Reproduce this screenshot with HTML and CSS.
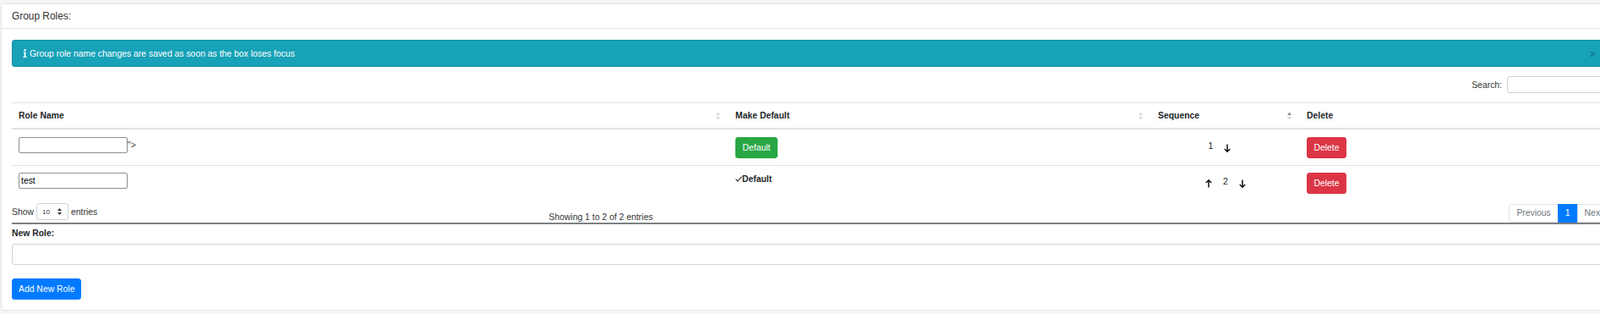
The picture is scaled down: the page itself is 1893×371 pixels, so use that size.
FILE: index.html
```html
<!DOCTYPE html>
<html lang="en">
<head>
<meta charset="utf-8">
<title>Group Roles</title>
<link rel="stylesheet" href="styles.css">
</head>
<body>
<div class="page">
  <section class="card">
    <header class="card-header">Group Roles:</header>
    <div class="card-body">
      <div class="alert">
        <span class="alert-msg">
          <svg class="info-icon" width="5" height="10" viewBox="0 0 5 10" aria-hidden="true"><circle cx="2.6" cy="1.2" r="1.2" fill="#fff"/><path d="M0.6 3.4H3.4V8.8H4.6V10H0.4V8.8H1.6V4.6H0.6Z" fill="#fff"/></svg>
          Group role name changes are saved as soon as the box loses focus
        </span>
        <button class="close" type="button" aria-label="Close">×</button>
      </div>

      <div class="dt-top">
        <label class="search">Search:<input type="search" class="search-input"></label>
      </div>

      <table class="roles">
        <colgroup>
          <col class="c-name"><col class="c-default"><col class="c-seq"><col class="c-del">
        </colgroup>
        <thead>
          <tr>
            <th><div class="th-inner"><span>Role Name</span><svg class="sort" width="5" height="10" viewBox="0 0 5 10"><path d="M2.5 0.5L5 4H0Z" fill="#d5d8db"/><path d="M2.5 9.5L5 6H0Z" fill="#d5d8db"/></svg></div></th>
            <th><div class="th-inner"><span>Make Default</span><svg class="sort" width="5" height="10" viewBox="0 0 5 10"><path d="M2.5 0.5L5 4H0Z" fill="#d5d8db"/><path d="M2.5 9.5L5 6H0Z" fill="#d5d8db"/></svg></div></th>
            <th><div class="th-inner"><span>Sequence</span><svg class="sort" width="5" height="10" viewBox="0 0 5 10"><path d="M2.5 0.5L5 4H0Z" fill="#8a8f94"/><path d="M2.5 9.5L5 6H0Z" fill="#d5d8db"/></svg></div></th>
            <th><div class="th-inner"><span>Delete</span></div></th>
          </tr>
        </thead>
        <tbody>
          <tr>
            <td><div class="name-cell"><input type="text" class="name-input"><span class="stray">"&gt;</span></div></td>
            <td><button class="btn btn-success" type="button">Default</button></td>
            <td class="seq">
              <div class="seq-inner">
                <span class="num">1</span>
                <svg class="arrow" width="8" height="10" viewBox="0 0 8 10"><path d="M4 0.5V9.2M0.8 6L4 9.2L7.2 6" fill="none" stroke="#111" stroke-width="1.5"/></svg>
                <span class="spacer"></span>
              </div>
            </td>
            <td><button class="btn btn-danger" type="button">Delete</button></td>
          </tr>
          <tr>
            <td><div class="name-cell"><input type="text" class="name-input" value="test"></div></td>
            <td><span class="is-default"><svg class="check" width="8" height="7" viewBox="0 0 8 7"><path d="M0.5 3.6L2.8 6L7.6 0.6" fill="none" stroke="#222" stroke-width="1.1"/></svg>Default</span></td>
            <td class="seq">
              <div class="seq-inner">
                <svg class="arrow" width="8" height="10" viewBox="0 0 8 10"><path d="M4 9.5V0.8M0.8 4L4 0.8L7.2 4" fill="none" stroke="#111" stroke-width="1.5"/></svg>
                <span class="num">2</span>
                <svg class="arrow" width="8" height="10" viewBox="0 0 8 10"><path d="M4 0.5V9.2M0.8 6L4 9.2L7.2 6" fill="none" stroke="#111" stroke-width="1.5"/></svg>
              </div>
            </td>
            <td><button class="btn btn-danger" type="button">Delete</button></td>
          </tr>
        </tbody>
      </table>

      <div class="dt-bottom">
        <div class="length">Show
          <span class="select">10<svg width="5" height="8" viewBox="0 0 5 8"><path d="M2.5 0L5 3H0Z" fill="#333"/><path d="M2.5 8L5 5H0Z" fill="#333"/></svg></span>
          entries</div>
        <div class="info">Showing 1 to 2 of 2 entries</div>
        <div class="paging">
          <span class="page-link first">Previous</span><span class="page-link active">1</span><span class="page-link last">Next</span>
        </div>
      </div>

      <div class="new-role">
        <label class="new-label">New Role:</label>
        <input type="text" class="form-control">
        <button class="btn btn-primary add-btn" type="button">Add New Role</button>
      </div>
    </div>
  </section>
</div>
</body>
</html>
```

FILE: styles.css
```css
html, body {
  margin: 0;
  padding: 0;
  overflow: hidden;
}

body {
  background: #f4f5f7;
  font-family: "Liberation Sans", Arial, sans-serif;
  font-size: 10.4px;
  color: #212529;
}

.page {
  width: 1940px;
  padding: 4px 0 3px 1px;
}

.card {
  width: 1917px;
  box-sizing: border-box;
  background: #fff;
  border: 1px solid #e1e4e8;
  border-radius: 3px;
}

.card-header {
  height: 28px;
  line-height: 28px;
  padding: 0 12px;
  font-size: 11.9px;
  color: #333;
  border-bottom: 1px solid #e1e4e8;
}

.card-body {
  padding: 13px 12px 12px;
}

/* alert */
.alert {
  height: 32px;
  box-sizing: border-box;
  display: flex;
  align-items: center;
  justify-content: space-between;
  padding: 0 15px 0 12px;
  margin-bottom: 11px;
  background: #17a2b8;
  border: 1px solid #1490a4;
  border-radius: 3px;
  color: #fff;
}

.alert-msg {
  display: flex;
  align-items: center;
  gap: 3px;
}

.info-icon {
  display: block;
}

.close {
  background: none;
  border: 0;
  padding: 0;
  font-family: "Liberation Sans", Arial, sans-serif;
  font-size: 15px;
  font-weight: normal;
  line-height: 1;
  color: rgba(0, 0, 0, 0.3);
}

/* search */
.dt-top {
  display: flex;
  justify-content: flex-end;
  height: 20px;
  margin-bottom: 11px;
}

.search {
  display: flex;
  align-items: center;
  color: #333;
}

.search-input {
  width: 122px;
  height: 20px;
  box-sizing: border-box;
  margin: 0 0 0 6px;
  border: 1px solid #ced4da;
  border-radius: 3px;
}

/* table */
.roles {
  width: 1891px;
  table-layout: fixed;
  border-collapse: separate;
  border-spacing: 0;
}

.c-name { width: 848px; }
.c-default { width: 500px; }
.c-seq { width: 176px; }
.c-del { width: 367px; }

.roles th {
  padding: 8px;
  line-height: 13px;
  text-align: left;
  font-weight: bold;
  border-top: 1px solid #dee2e6;
  border-bottom: 2px solid #dee2e6;
}

.th-inner {
  display: flex;
  align-items: center;
  justify-content: space-between;
  padding-right: 2px;
}

.sort {
  display: block;
}

.roles td {
  height: 25px;
  padding: 8px;
  vertical-align: top;
  line-height: 13px;
  border-top: 1px solid #dee2e6;
}

.roles tbody tr:first-child td {
  border-top-color: transparent;
}

.name-cell {
  display: flex;
  align-items: flex-start;
}

.stray {
  color: #444;
  line-height: 20px;
}

.name-input {
  width: 129px;
  height: 19px;
  box-sizing: border-box;
  margin: 0;
  padding: 1px 2px;
  border: 1px solid #8d8d8d;
  border-radius: 2px;
  font-family: "Liberation Sans", Arial, sans-serif;
  font-size: 10.4px;
  color: #000;
}

.btn {
  display: block;
  height: 25px;
  box-sizing: border-box;
  padding: 0 7.5px;
  border: 1px solid transparent;
  border-radius: 3px;
  font-family: "Liberation Sans", Arial, sans-serif;
  font-size: 10.4px;
  line-height: 23px;
  color: #fff;
}

.btn-success { background: #28a745; border-color: #28a745; }
.btn-danger { background: #dc3545; border-color: #dc3545; }
.btn-primary { background: #007bff; border-color: #007bff; }

.is-default {
  display: flex;
  align-items: center;
  font-weight: bold;
  line-height: 13px;
  padding-top: 1px;
}

.check {
  display: block;
}

.seq-inner {
  display: flex;
  justify-content: center;
  align-items: center;
  height: 25px;
  gap: 13px;
}

.seq-inner .num {
  margin-top: -4px;
}

.seq-inner .arrow {
  display: block;
}

.spacer {
  width: 1px;
}

/* bottom controls */
.dt-bottom {
  display: grid;
  grid-template-columns: 1fr 1fr 1fr;
  align-items: start;
  padding-top: 3px;
  border-bottom: 2px solid #7c8184;
  color: #333;
}

.length {
  display: flex;
  align-items: center;
  gap: 3px;
  height: 20px;
}

.select {
  display: inline-flex;
  align-items: center;
  justify-content: space-between;
  width: 38px;
  height: 20px;
  box-sizing: border-box;
  padding: 0 7px 0 6px;
  border: 1px solid #ced4da;
  border-radius: 3px;
  font-size: 8px;
  color: #333;
}

.info {
  padding: 10px 0 0 5px;
  line-height: 13px;
}

.paging {
  justify-self: end;
  display: flex;
  margin-top: 1px;
}

.page-link {
  height: 22px;
  box-sizing: border-box;
  padding: 0 8px;
  line-height: 20px;
  border: 1px solid #dee2e6;
  color: #6c757d;
  background: #fff;
}

.page-link + .page-link {
  margin-left: -1px;
}

.page-link.first {
  border-radius: 3px 0 0 3px;
}

.page-link.last {
  border-radius: 0 3px 3px 0;
}

.page-link.active {
  background: #007bff;
  border-color: #007bff;
  color: #fff;
}

/* new role */
.new-role {
  display: flex;
  flex-direction: column;
  align-items: flex-start;
}

.new-label {
  margin-top: 4px;
  line-height: 13px;
  font-weight: bold;
  color: #212529;
}

.form-control {
  width: 100%;
  height: 25px;
  box-sizing: border-box;
  margin: 6px 0 0;
  border: 1px solid #ced4da;
  border-radius: 3px;
}

.add-btn {
  margin-top: 16px;
  padding: 0 7px;
}
```
